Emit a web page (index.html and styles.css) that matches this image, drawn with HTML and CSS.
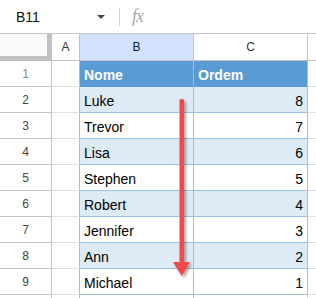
FILE: index.html
```html
<!DOCTYPE html>
<html lang="en">
<head>
    <meta charset="UTF-8">
    <title>Sheet</title>
    <link rel="stylesheet" href="styles.css">
</head>
<body>

<div class="toolbar">
    <div class="namebox">B11</div>
    <div class="caret"></div>
    <div class="sep"></div>
    <div class="fx">fx</div>
</div>

<div class="sheet">
    <div class="row head">
        <div class="cell corner"></div>
        <div class="cell colA">A</div>
        <div class="cell colB sel">B</div>
        <div class="cell colC">C</div>
        <div class="cell colD"></div>
    </div>

    <div class="row">
        <div class="cell num faded">1</div>
        <div class="cell colA"></div>
        <div class="cell colB data top">Nome</div>
        <div class="cell colC data top">Ordem</div>
        <div class="cell colD"></div>
    </div>
    <div class="row band">
        <div class="cell num">2</div>
        <div class="cell colA"></div>
        <div class="cell colB data">Luke</div>
        <div class="cell colC data n">8</div>
        <div class="cell colD"></div>
    </div>
    <div class="row">
        <div class="cell num">3</div>
        <div class="cell colA"></div>
        <div class="cell colB data">Trevor</div>
        <div class="cell colC data n">7</div>
        <div class="cell colD"></div>
    </div>
    <div class="row band">
        <div class="cell num">4</div>
        <div class="cell colA"></div>
        <div class="cell colB data">Lisa</div>
        <div class="cell colC data n">6</div>
        <div class="cell colD"></div>
    </div>
    <div class="row">
        <div class="cell num">5</div>
        <div class="cell colA"></div>
        <div class="cell colB data">Stephen</div>
        <div class="cell colC data n">5</div>
        <div class="cell colD"></div>
    </div>
    <div class="row band">
        <div class="cell num">6</div>
        <div class="cell colA"></div>
        <div class="cell colB data">Robert</div>
        <div class="cell colC data n">4</div>
        <div class="cell colD"></div>
    </div>
    <div class="row">
        <div class="cell num">7</div>
        <div class="cell colA"></div>
        <div class="cell colB data">Jennifer</div>
        <div class="cell colC data n">3</div>
        <div class="cell colD"></div>
    </div>
    <div class="row band">
        <div class="cell num">8</div>
        <div class="cell colA"></div>
        <div class="cell colB data">Ann</div>
        <div class="cell colC data n">2</div>
        <div class="cell colD"></div>
    </div>
    <div class="row">
        <div class="cell num">9</div>
        <div class="cell colA"></div>
        <div class="cell colB data">Michael</div>
        <div class="cell colC data n">1</div>
        <div class="cell colD"></div>
    </div>
    <div class="row plain">
        <div class="cell num"></div>
        <div class="cell colA"></div>
        <div class="cell colB"></div>
        <div class="cell colC"></div>
        <div class="cell colD"></div>
    </div>

    <svg class="arrow" width="30" height="190" viewBox="0 0 30 190">
        <defs>
            <filter id="sh" x="-50%" y="-10%" width="200%" height="120%">
                <feDropShadow dx="2" dy="2" stdDeviation="1.5" flood-color="#000" flood-opacity="0.35"/>
            </filter>
        </defs>
        <g filter="url(#sh)">
            <rect x="9.5" y="4" width="4.5" height="165" rx="1.5" fill="#f54848"/>
            <polygon points="3,167 20,167 11.7,181" fill="#f54848"/>
        </g>
    </svg>
</div>

</body>
</html>
```

FILE: styles.css
```css
body {
    margin: 0;
    width: 316px;
    height: 298px;
    overflow: hidden;
    background: #fff;
    font-family: "Liberation Sans", Arial, sans-serif;
}

.toolbar {
    height: 33px;
    border-bottom: 1px solid #c7c7c7;
    display: flex;
    align-items: center;
}
.namebox {
    width: 81px;
    padding-left: 16px;
    font-size: 14px;
    color: #111;
}
.caret {
    width: 0;
    height: 0;
    border-left: 4px solid transparent;
    border-right: 4px solid transparent;
    border-top: 4px solid #444;
}
.sep {
    width: 1px;
    height: 18px;
    background: #d0d0d0;
    margin-left: 14px;
}
.fx {
    margin-left: 12px;
    font-family: "Liberation Serif", serif;
    font-style: italic;
    font-size: 18px;
    color: #a8a8a8;
    letter-spacing: -1px;
}

.sheet {
    position: relative;
    height: 264px;
    overflow: hidden;
}
.row {
    display: flex;
    height: 26px;
}
.row.head {
    height: 27px;
}
.row.plain {
    height: 3px;
}
.cell {
    box-sizing: border-box;
    height: 100%;
    border-right: 1px solid #e1e1e1;
    border-bottom: 1px solid #e1e1e1;
    display: flex;
    align-items: center;
    overflow: hidden;
}
.plain .cell {
    border-bottom: none;
}
.num {
    width: 52px;
    justify-content: center;
    border-right-color: #c4c4c4;
    border-bottom-color: #c4c4c4;
    font-size: 12px;
    color: #444;
    padding-top: 1px;
}
.num.faded {
    color: #888;
}
.colA { width: 28px; border-right-color: #9bc2e6; }
.colB { width: 114px; }
.colC { width: 114px; }
.colD { flex: 1; border-right: none; }

.head .cell {
    border-bottom-color: #c4c4c4;
    border-right-color: #c4c4c4;
    justify-content: center;
    font-size: 12px;
    color: #333;
}
.head .corner {
    width: 52px;
    background: #f8f9fa;
    border-right: 5px solid #c0c0c0;
    border-bottom: 5px solid #c0c0c0;
}
.head .sel {
    background: #d3e3fd;
    color: #0b1a36;
}

.data {
    border-right-color: #9bc2e6;
    border-bottom-color: #9bc2e6;
    padding: 3px 4px 0;
    font-size: 14px;
    color: #000;
}
.data.n {
    justify-content: flex-end;
}
.data.top {
    background: #5b9bd5;
    color: #fff;
    font-weight: bold;
    border-bottom-color: #5b9bd5;
}
.band .data {
    background: #ddebf7;
}
.plain .colA {
    border-right-color: #9bc2e6;
}
.plain .colB {
    border-right-color: #9bc2e6;
}

.arrow {
    position: absolute;
    left: 170px;
    top: 61px;
}
```
